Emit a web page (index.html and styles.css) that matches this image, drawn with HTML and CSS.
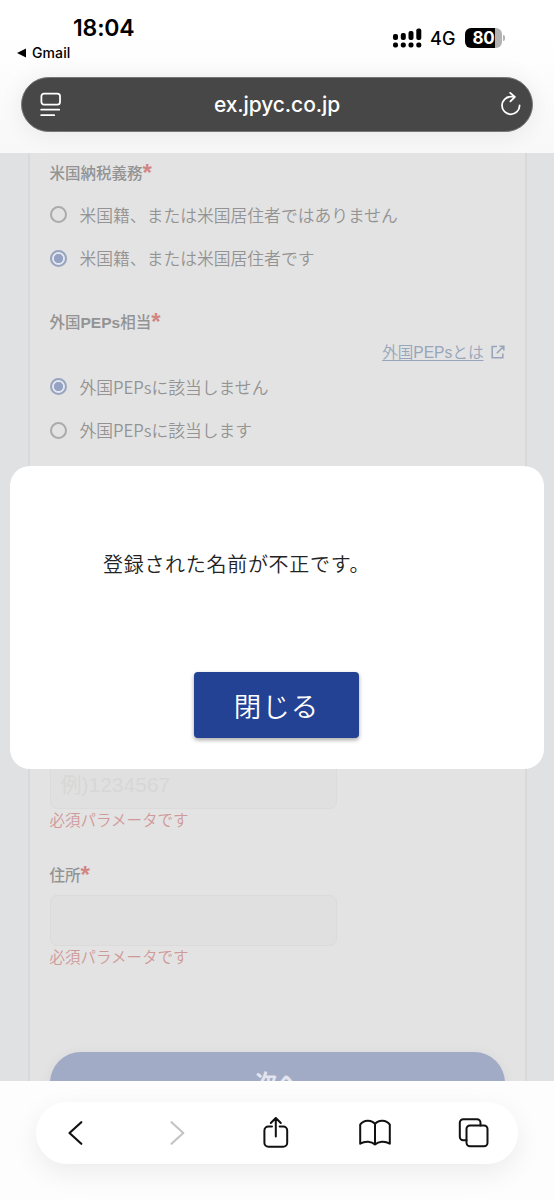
FILE: index.html
```html
<!DOCTYPE html>
<html lang="ja">
<head>
<meta charset="utf-8">
<meta name="viewport" content="width=device-width">
<title>ex.jpyc.co.jp</title>
<link rel="stylesheet" href="styles.css">
</head>
<body>
<div class="screen">
  <header class="browser-top">
    <div class="status">
      <div class="status-left">
        <div class="time">18:04</div>
        <div class="back-app"><svg width="10" height="10" viewBox="0 0 10 10"><path d="M0 5 9 .5v9z"/></svg><span>Gmail</span></div>
      </div>
      <div class="status-right">
        <svg class="signal" width="30" height="20" viewBox="0 0 30 20">
          <rect x="1" y="6" width="5" height="6" rx="2"/><rect x="8.800" y="5" width="5" height="7" rx="2"/><rect x="16.500" y="3" width="5" height="9" rx="2"/><rect x="24.300" y="0.500" width="5" height="11.500" rx="2"/>
          <rect x="1" y="14.500" width="5" height="5" rx="2"/><rect x="8.800" y="14.500" width="5" height="5" rx="2"/><rect x="16.500" y="14.500" width="5" height="5" rx="2"/><rect x="24.300" y="14.500" width="5" height="5" rx="2"/>
        </svg>
        <span class="network">4G</span>
        <div class="battery"><span>80</span></div><i class="battery-tip"></i>
      </div>
    </div>
    <div class="address">
      <svg width="22" height="26" viewBox="0 0 22 26"><rect x="1.400" y="1.700" width="18.600" height="11" rx="2.600"/><path d="M1.200 17.700h18M1.200 23.200h13"/></svg>
      <span>ex.jpyc.co.jp</span>
      <svg width="22" height="26" viewBox="0 0 22 26"><path d="M19.600 13.500a8.800 8.800 0 1 1-8.800-8.800h3.700M10.200 .9l4.700 4-4.500 4.500"/></svg>
    </div>
  </header>

  <main class="page">
    <form class="card">
      <h2 class="label tax">米国納税義務<em>*</em></h2>
      <div class="radio"><i></i><span>米国籍、または米国居住者ではありません</span></div>
      <div class="radio on"><i></i><span>米国籍、または米国居住者です</span></div>
      <h2 class="label peps">外国<b>PEPs</b>相当<em>*</em></h2>
      <div class="help"><span>外国PEPsとは</span><svg width="14" height="14" viewBox="0 0 14 14"><path d="M6 1.500H1.200v11.300h10.600V8.500M8.500 1.200h4.300v4.300M12.500 1.500 5.800 8.200"/></svg></div>
      <div class="radio on"><i></i><span>外国PEPsに該当しません</span></div>
      <div class="radio"><i></i><span>外国PEPsに該当します</span></div>
      <div class="field postal">例)1234567</div>
      <p class="error">必須パラメータです</p>
      <h2 class="label addr">住所<em>*</em></h2>
      <div class="field"></div>
      <p class="error">必須パラメータです</p>
      <div class="next">次へ</div>
    </form>
    <div class="modal">
      <p>登録された名前が不正です。</p>
      <button type="button">閉じる</button>
    </div>
  </main>

  <footer class="browser-bottom">
    <nav class="toolbar">
      <svg width="34" height="34" viewBox="0 0 34 34"><path d="M22.300 6.200 10.500 17l11.800 10.800"/></svg>
      <svg class="off" width="34" height="34" viewBox="0 0 34 34"><path d="M12.500 6.200 24.300 17 12.500 27.800"/></svg>
      <svg class="thin" width="34" height="34" viewBox="0 0 34 34"><path d="M14 10.600h-3.600a4 4 0 0 0-4 4v12.200a4 4 0 0 0 4 4h14.800a4 4 0 0 0 4-4V14.600a4 4 0 0 0-4-4H21.600M17.800 20.500V2.500M12.800 7 17.800 2l5 5"/></svg>
      <svg class="thin" width="34" height="34" viewBox="0 0 34 34"><path d="M17 8v20.500c-3.400-3.400-10-3.800-14.800-.8V8.600C5.600 3.600 13.600 3.400 17 8c3.400-4.600 11.400-4.400 14.800.6v19.100c-4.800-3-11.400-2.600-14.800.8"/></svg>
      <svg class="thin" width="34" height="34" viewBox="0 0 34 34"><rect x="9.500" y="9.500" width="21" height="20.800" rx="3.500"/><path d="M9.500 24.200H6.300a3.500 3.500 0 0 1-3.500-3.500V6.700a3.500 3.500 0 0 1 3.500-3.500H20a3.500 3.500 0 0 1 3.500 3.500v2.800"/></svg>
    </nav>
  </footer>
</div>
</body>
</html>
```
FILE: styles.css
```css
* { box-sizing: border-box; }
body { margin: 0; background: #fff; }
h2, p { margin: 0; }
svg { display: block; flex: none; }
.screen {
  width: 554px; height: 1200px; overflow: hidden;
  display: flex; flex-direction: column;
  font-family: "Liberation Sans", "Noto Sans CJK JP", sans-serif;
}
.browser-top {
  height: 153px; flex: none; overflow: hidden;
  background: linear-gradient(#fff 0 35px, #f8f8f8 153px);
  font-family: Inter, sans-serif;
}
.status { height: 77px; display: flex; justify-content: space-between; }
.status-left { padding: 14px 0 0 17px; }
.time { margin-left: 56px; font-size: 23px; line-height: 28px; font-weight: 600; letter-spacing: -.15px; }
.back-app { display: flex; align-items: center; gap: 5px; margin-top: 2px; font-size: 14px; line-height: 17px; font-weight: 500; letter-spacing: .1px; }
.status-right { display: flex; align-items: center; height: 22px; margin: 27px 49px 0 0; }
.network { margin-left: 8px; font-size: 18px; line-height: 24px; padding-top: 1px; font-weight: 450; letter-spacing: .1px; width: 26px; }
.battery {
  width: 37px; height: 20px; margin-left: 9px; border-radius: 6px;
  background: linear-gradient(90deg, #000 30px, #b2b2b2 30px);
  color: #fff; font-size: 17px; line-height: 20px; font-weight: 650; text-align: center; letter-spacing: -.2px;
}
.battery-tip { width: 2px; height: 6px; margin-left: 1px; border-radius: 0 2px 2px 0; background: #b2b2b2; }
.address {
  margin: 0 21px 0; height: 55px; padding: 0 10px 0 18px; border-radius: 28px;
  display: flex; align-items: center; justify-content: space-between;
  background: #474747; border: 1px solid #777; color: #fff;
  font-size: 21px; font-weight: 450; letter-spacing: -.1px;
  box-shadow: 0 2px 24px rgba(0,0,0,.08);
}
.address span { margin-right: 8px; }
.address svg { fill: none; stroke: #fff; stroke-width: 1.8; stroke-linecap: round; stroke-linejoin: round; }
.page {
  position: relative; height: 928px; flex: none; overflow: hidden;
  padding: 0 27.5px 0 28px; background: #e0e1e3;
}
.card {
  height: 928px; padding: 0 20px 0 19.5px; overflow: hidden;
  background: #e3e3e3; border: solid #d8d9da; border-width: 0 2px;
  color: #939393;
}
.label { font-size: 15.5px; line-height: 22px; font-weight: 500; height: 22px; }
.label b { font-weight: 700; }
.label em { color: #d18684; font-style: normal; font-weight: 700; font-size: 24px; line-height: 10px; position: relative; top: 2px; }
.tax { margin: 10px 0 8px; }
.radio { display: flex; align-items: center; gap: 13px; height: 43.500px; font: 350 16.8px "Noto Sans CJK JP", sans-serif; }
.radio i { width: 17px; height: 17px; border: 2px solid #ababab; border-radius: 50%; flex: none; }
.radio.on i { border-color: #98a3bd; background: radial-gradient(circle, #95a2c4 4.3px, #e3e7f0 5px); }
.peps { margin-top: 32px; }
.help {
  display: flex; justify-content: flex-end; align-items: center; gap: 7px; height: 24px; margin: 6px 0 1px;
  color: #98a5ba; font-size: 15.6px; font-weight: 350;
}
.help span { text-decoration: underline; text-underline-offset: 2px; position: relative; top: -1px; }
.help svg { fill: none; stroke: #98a5ba; stroke-width: 1.6; }
.field { width: 287px; height: 51px; border: 1px solid #dbdbdb; border-radius: 7px; background: #e0e0e0; color: #d7d7d7; font-size: 21px; line-height: 51px; padding-left: 10px; }
.postal { margin-top: 306px; }
.error { font-size: 15.5px; line-height: 24px; height: 22px; font-weight: 350; color: #d09999; }
.addr { margin: 34px 0 8px; }
.next {
  margin-top: 84px; height: 62px; border-radius: 31px; background: #a1abc5;
  color: #e2e4ee; text-align: center; font-size: 22px; line-height: 62px; font-weight: 700;
  box-shadow: 0 2px 14px rgba(0,0,0,.06);
}
.modal {
  position: absolute; left: 10px; top: 313px; width: 534px; height: 303px;
  border-radius: 20px; background: #fff; color: #222;
  display: flex; flex-direction: column; align-items: center;
  font-family: "Noto Sans CJK JP", sans-serif;
}
.modal p { align-self: flex-start; margin: 83px 0 0 93px; font-size: 20px; line-height: 30px; font-weight: 350; letter-spacing: .7px; }
.modal button {
  width: 165px; height: 66px; margin: 93px 1px 0 0; padding: 0; border: 0; border-radius: 4px;
  background: #234294; color: #fff; font: 350 27.5px/62px "Noto Sans CJK JP", sans-serif; letter-spacing: 1px;
  box-shadow: 0 2px 4px rgba(0,0,0,.35);
}
.browser-bottom { flex: 1; padding: 21px 36px 0; background: #fdfdfd; overflow: hidden; }
.toolbar {
  height: 62px; border-radius: 31px; background: #fff; padding: 0 27px 0 23px;
  display: flex; align-items: center; justify-content: space-between;
  box-shadow: 0 9px 28px rgba(0,0,0,.07);
}
.toolbar svg { fill: none; stroke: #111; stroke-width: 2.2; stroke-linecap: round; stroke-linejoin: round; }
.toolbar .off { stroke: #c4c4c4; }
.toolbar .thin { stroke-width: 2; }
```
